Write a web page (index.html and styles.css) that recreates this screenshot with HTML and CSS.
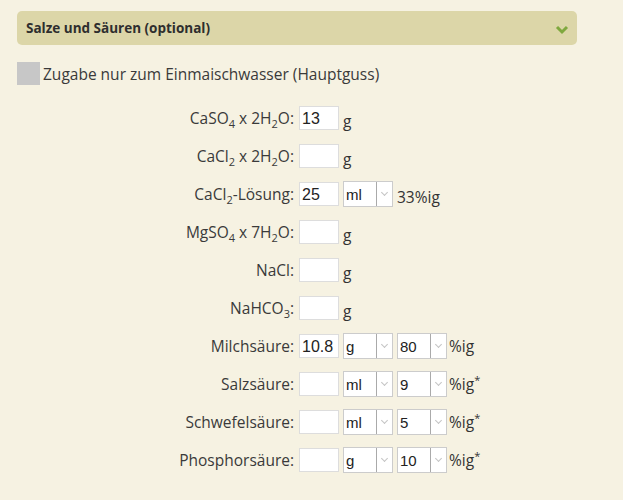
FILE: index.html
```html
<!DOCTYPE html>
<html lang="de">
<head>
    <meta charset="UTF-8">
    <title>Salze und Säuren</title>
    <link rel="stylesheet" href="styles.css">
</head>
<body>
    <div class="panel-head">
        <span>Salze und Säuren (optional)</span>
        <svg class="chevron" width="14" height="10" viewBox="0 0 14 10">
            <path d="M2 2 L7 7 L12 2" fill="none" stroke="#7fa83e" stroke-width="3"/>
        </svg>
    </div>

    <label class="check">
        <span class="box"></span>
        Zugabe nur zum Einmaischwasser (Hauptguss)
    </label>

    <div class="rows">
        <div class="row">
            <label>CaSO<sub>4</sub> x 2H<sub>2</sub>O:</label>
            <input type="text" value="13">
            <span class="unit">g</span>
        </div>
        <div class="row">
            <label>CaCl<sub>2</sub> x 2H<sub>2</sub>O:</label>
            <input type="text">
            <span class="unit">g</span>
        </div>
        <div class="row">
            <label>CaCl<sub>2</sub>-Lösung:</label>
            <input type="text" value="25">
            <span class="sel">ml</span>
            <span class="unit">33%ig</span>
        </div>
        <div class="row">
            <label>MgSO<sub>4</sub> x 7H<sub>2</sub>O:</label>
            <input type="text">
            <span class="unit">g</span>
        </div>
        <div class="row">
            <label>NaCl:</label>
            <input type="text">
            <span class="unit">g</span>
        </div>
        <div class="row">
            <label>NaHCO<sub>3</sub>:</label>
            <input type="text">
            <span class="unit">g</span>
        </div>
        <div class="row">
            <label>Milchsäure:</label>
            <input type="text" value="10.8">
            <span class="sel">g</span>
            <span class="sel">80</span>
            <span class="pct">%ig</span>
        </div>
        <div class="row">
            <label>Salzsäure:</label>
            <input type="text">
            <span class="sel">ml</span>
            <span class="sel">9</span>
            <span class="pct">%ig<sup>*</sup></span>
        </div>
        <div class="row">
            <label>Schwefelsäure:</label>
            <input type="text">
            <span class="sel">ml</span>
            <span class="sel">5</span>
            <span class="pct">%ig<sup>*</sup></span>
        </div>
        <div class="row">
            <label>Phosphorsäure:</label>
            <input type="text">
            <span class="sel">g</span>
            <span class="sel">10</span>
            <span class="pct">%ig<sup>*</sup></span>
        </div>
    </div>
</body>
</html>
```

FILE: styles.css
```css
body {
    margin: 0;
    padding: 11px 46px 0 17px;
    background-color: #f6f2e2;
    font-family: "Open Sans", sans-serif;
    font-size: 15.5px;
    color: #333;
}

.panel-head {
    display: flex;
    justify-content: space-between;
    align-items: center;
    height: 34px;
    padding: 0 9px;
    background-color: #dcd6a8;
    border-radius: 5px;
    font-size: 13.5px;
    font-weight: bold;
    color: #2e2e2e;
}

.chevron {
    margin-top: 3px;
    margin-right: -1px;
}

.check {
    display: flex;
    align-items: center;
    gap: 3px;
    margin-top: 17px;
    color: #3a3a3a;
}

.check .box {
    width: 23px;
    height: 23px;
    background-color: #c7c7c7;
}

.rows {
    margin-top: 14px;
}

.row {
    display: flex;
    align-items: center;
    height: 38px;
}

.row label {
    width: 277px;
    padding-right: 5px;
    text-align: right;
    color: #3a3a3a;
}

sub {
    font-size: 11px;
    vertical-align: -4px;
    line-height: 0;
}

sup {
    font-size: 11px;
    vertical-align: 6px;
    line-height: 0;
}

input[type="text"] {
    width: 40px;
    height: 24px;
    box-sizing: border-box;
    padding: 2px 2px 0;
    border: 1px solid #ddd;
    background-color: #fff;
    font-family: "Liberation Sans", Arial, sans-serif;
    font-size: 16px;
    color: #222;
    margin: 0;
}

.unit {
    margin-left: 4px;
    margin-top: 6px;
}

.sel {
    position: relative;
    width: 50px;
    height: 26px;
    box-sizing: border-box;
    margin-left: 4px;
    padding: 0 0 0 2px;
    border: 1px solid #ccc;
    background-color: #fff;
    font-family: "Liberation Sans", Arial, sans-serif;
    font-size: 15px;
    line-height: 25px;
    color: #222;
}

.sel::before {
    content: '';
    position: absolute;
    top: 0;
    right: 15px;
    width: 1px;
    height: 100%;
    background-color: #aaa;
}

.sel::after {
    content: '';
    position: absolute;
    top: 8px;
    right: 5px;
    width: 4px;
    height: 4px;
    border-right: 1px solid #c4c4c4;
    border-bottom: 1px solid #c4c4c4;
    transform: rotate(45deg);
}

.pct {
    margin-left: 2px;
}
```
